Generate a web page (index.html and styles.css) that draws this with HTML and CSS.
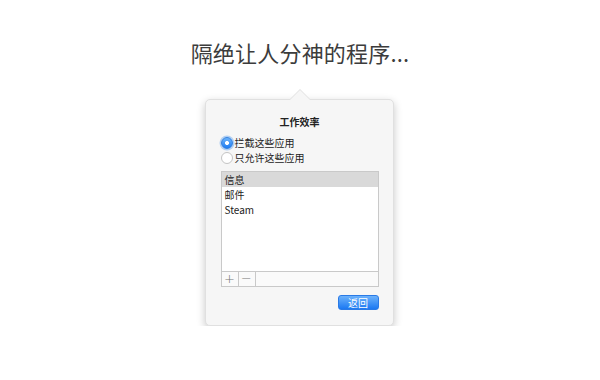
FILE: index.html
```html
<!DOCTYPE html>
<html>
<head>
    <title>隔绝让人分神的程序</title>
    <link rel="stylesheet" href="styles.css">
</head>
<body>
    <div class="page">
        <h1 class="title">隔绝让人分神的程序...</h1>

        <div class="popover">
            <div class="popover-title">工作效率</div>

            <label class="radio-row">
                <span class="radio checked"></span>拦截这些应用
            </label>
            <label class="radio-row">
                <span class="radio"></span>只允许这些应用
            </label>

            <div class="app-list">
                <div class="rows">
                    <div class="row selected">信息</div>
                    <div class="row">邮件</div>
                    <div class="row">Steam</div>
                </div>
                <div class="list-bar">
                    <span class="bar-btn">+</span>
                    <span class="bar-btn">&minus;</span>
                </div>
            </div>

            <div class="actions">
                <button class="btn-primary">返回</button>
            </div>
        </div>
    </div>
</body>
</html>
```

FILE: styles.css
```css
body {
    margin: 0;
    background-color: #ffffff;
    font-family: "Noto Sans CJK SC", "Noto Sans", sans-serif;
    color: #222;
}

.page {
    display: flex;
    flex-direction: column;
    align-items: center;
    padding-top: 37px;
}

.title {
    margin: 0;
    font-size: 22px;
    line-height: 30px;
    font-weight: normal;
    color: #3c3c3c;
    letter-spacing: 0.2px;
}

.popover {
    position: relative;
    width: 158px;
    margin-top: 32px;
    margin-left: -2px;
    padding: 15px 14px 15px 15px;
    background-color: #f6f6f6;
    border: 1px solid #e0e0e0;
    border-radius: 5px;
    box-shadow: 0 3px 9px rgba(0,0,0,0.22);
}

/* arrow on top of the popover */
.popover::before,
.popover::after {
    content: "";
    position: absolute;
    left: 50%;
    width: 0;
    height: 0;
    border-left: 11px solid transparent;
    border-right: 11px solid transparent;
    margin-left: -10px;
}

.popover::before {
    top: -11px;
    border-bottom: 11px solid #e0e0e0;
}

.popover::after {
    top: -10px;
    border-bottom: 11px solid #f6f6f6;
}

.popover-title {
    text-align: center;
    font-size: 10px;
    line-height: 14px;
    font-weight: bold;
    color: #222;
    margin-bottom: 6px;
}

.radio-row {
    display: flex;
    align-items: center;
    height: 15px;
    font-size: 10px;
    color: #222;
}

.radio {
    width: 12px;
    height: 12px;
    box-sizing: border-box;
    margin-left: 0;
    margin-right: 2px;
    border-radius: 50%;
    border: 1px solid #c4c4c4;
    background: #ffffff;
}

.radio.checked {
    border: 1px solid #2f7fe0;
    background: radial-gradient(circle, #ffffff 0, #ffffff 1.7px, transparent 2.3px),
                linear-gradient(#6cb3fa, #1f7cf2);
    box-shadow: 0 0 0 1.5px rgba(90,160,240,0.45);
}

.app-list {
    margin-top: 6px;
    height: 116px;
    display: flex;
    flex-direction: column;
    border: 1px solid #c9c9c9;
    background-color: #ffffff;
    box-sizing: border-box;
}

.rows {
    flex: 1;
}

.row {
    height: 15px;
    line-height: 15px;
    padding-left: 3px;
    font-size: 10px;
    color: #222;
}

.row.selected {
    background-color: #d9d9d9;
}

.list-bar {
    display: flex;
    height: 14px;
    border-top: 1px solid #c9c9c9;
    background-color: #fafafa;
}

.bar-btn {
    width: 16px;
    height: 14px;
    line-height: 13px;
    text-align: center;
    font-family: "DejaVu Sans", sans-serif;
    font-size: 13px;
    font-weight: 200;
    color: #777;
    border-right: 1px solid #c9c9c9;
}

.actions {
    display: flex;
    justify-content: flex-end;
    margin-top: 8px;
}

.btn-primary {
    width: 41px;
    height: 15px;
    padding: 0;
    border: 1px solid #2a7ae6;
    border-radius: 3px;
    background: linear-gradient(#6cb2fb, #1b78f2);
    color: #ffffff;
    font-family: "Noto Sans CJK SC", sans-serif;
    font-size: 10px;
    line-height: 13px;
}
```
